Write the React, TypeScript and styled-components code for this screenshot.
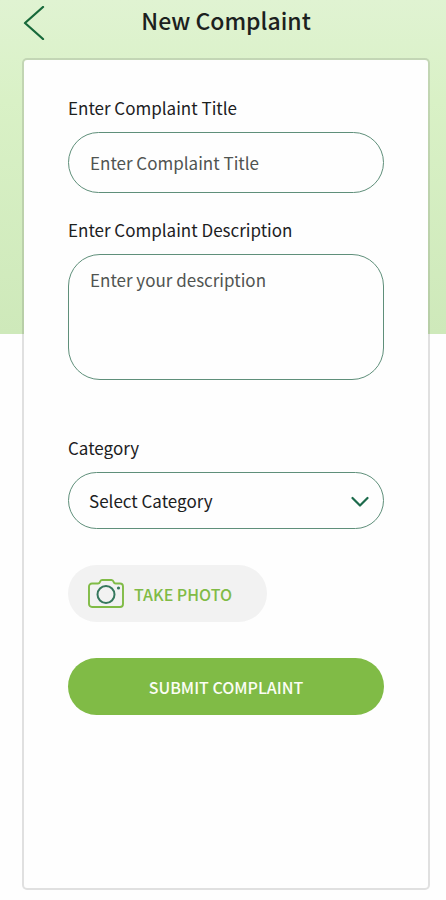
import React from "react";
import styled, { createGlobalStyle } from "styled-components";

const GlobalStyle = createGlobalStyle`
  *, *::before, *::after { box-sizing: border-box; }
  body {
    margin: 0;
    background: #fefefe;
    color: #1c211e;
    font-family: "Noto Sans CJK SC", "Noto Sans", sans-serif;
  }
  button, input, textarea, select { font: inherit; }
`;

const Page = styled.div`
  display: flex;
  flex-direction: column;
  min-height: 100vh;
  padding: 0 16px 10px 22px;
  background: linear-gradient(#e0f3d2, #d9f1c6 30%, #cee9ba) top / 100% 334px no-repeat;
`;

const Header = styled.header`
  display: grid;
  grid-template-columns: 24px 1fr 24px;
  align-items: center;
  height: 58px;
  padding-bottom: 13px;
`;

const BackButton = styled.button`
  display: flex;
  padding: 0;
  border: 0;
  background: none;
  color: #17693a;
  cursor: pointer;
`;

const Title = styled.h1`
  margin: 0;
  padding-bottom: 6px;
  font-size: 23px;
  font-weight: 500;
  line-height: 32px;
  text-align: center;
`;

const Card = styled.form`
  display: flex;
  flex: 1;
  flex-direction: column;
  padding: 36px 44px;
  border: 2px solid rgba(70, 70, 70, 0.16);
  border-radius: 5px;
  background: #fefefe;
  background-clip: padding-box;
`;

const Field = styled.div<{ $gap: number }>`
  display: flex;
  flex-direction: column;
  gap: 12px;
  margin-bottom: ${({ $gap }) => $gap}px;
`;

const Label = styled.label`
  font-size: 17px;
  line-height: 24px;
`;

const controlStyle = `
  width: 100%;
  border: 1px solid #5f8f7a;
  background: transparent;
  font-size: 17px;
  line-height: 24px;
  outline-color: #17693a;
  &::placeholder { color: #505451; opacity: 1; }
`;

const TextInput = styled.input`
  ${controlStyle}
  height: 61px;
  padding: 0 21px;
  border-radius: 32px;
`;

const TextArea = styled.textarea`
  ${controlStyle}
  display: block;
  height: 126px;
  padding: 13px 21px;
  border-radius: 32px;
  resize: none;
`;

const SelectShell = styled.div`
  display: grid;
  align-items: center;
  & > * { grid-area: 1 / 1; }
`;

const Select = styled.select`
  ${controlStyle}
  height: 57px;
  padding: 0 48px 0 20px;
  border-radius: 32px;
  color: inherit;
  appearance: none;
`;

const Chevron = styled.svg`
  justify-self: end;
  margin-right: 15px;
  color: #1c6a4b;
  pointer-events: none;
`;

const Button = styled.button<{ $primary?: boolean }>`
  display: flex;
  align-items: center;
  justify-content: ${({ $primary }) => ($primary ? "center" : "flex-start")};
  align-self: ${({ $primary }) => ($primary ? "stretch" : "flex-start")};
  gap: 10px;
  height: 57px;
  margin-bottom: 36px;
  padding: ${({ $primary }) => ($primary ? "0 20px" : "0 35px 0 20px")};
  border: 0;
  border-radius: 32px;
  background: ${({ $primary }) => ($primary ? "#80bb46" : "#f2f2f2")};
  color: ${({ $primary }) => ($primary ? "#fbfdf5" : "#80bb46")};
  font-size: 16px;
  font-weight: 500;
  line-height: 24px;
  cursor: pointer;
`;

const BackIcon = () => (
  <svg width="24" height="34" viewBox="0 0 24 34" fill="none" aria-hidden="true">
    <path d="M21 1 3 17l18 16" stroke="currentColor" strokeWidth="2.3" strokeLinecap="round" strokeLinejoin="round" />
  </svg>
);

const CameraIcon = () => (
  <svg width="36" height="30" viewBox="0 0 36 30" fill="none" aria-hidden="true">
    <path
      d="M4 4.500h6c1.200 0 1.600-.4 2-1.600.3-1.200.9-1.900 2-1.900h9.500c1.200 0 1.700.7 2.100 1.900.4 1.200.8 1.600 2 1.600H32a3 3 0 0 1 3 3V25a3 3 0 0 1-3 3H4a3 3 0 0 1-3-3V7.500a3 3 0 0 1 3-3Z"
      stroke="#80bb46"
      strokeWidth="1.9"
    />
    <circle cx="18" cy="15.500" r="8.500" stroke="#36785d" strokeWidth="2" />
    <circle cx="30.500" cy="9" r="1.600" fill="#36785d" />
  </svg>
);

export default function App() {
  return (
    <>
      <GlobalStyle />
      <Page>
        <Header>
          <BackButton type="button" aria-label="Back">
            <BackIcon />
          </BackButton>
          <Title>New Complaint</Title>
        </Header>
        <Card onSubmit={(event) => event.preventDefault()}>
          <Field $gap={25}>
            <Label htmlFor="title">Enter Complaint Title</Label>
            <TextInput id="title" type="text" placeholder="Enter Complaint Title" />
          </Field>
          <Field $gap={56}>
            <Label htmlFor="description">Enter Complaint Description</Label>
            <TextArea id="description" placeholder="Enter your description" />
          </Field>
          <Field $gap={36}>
            <Label htmlFor="category">Category</Label>
            <SelectShell>
              <Select id="category" defaultValue="">
                <option value="">Select Category</option>
              </Select>
              <Chevron width="18" height="14" viewBox="0 0 18 14" fill="none" aria-hidden="true">
                <path d="m1.500 4 7.500 7.500L16.500 4" stroke="currentColor" strokeWidth="2.200" strokeLinecap="round" strokeLinejoin="round" />
              </Chevron>
            </SelectShell>
          </Field>
          <Button type="button">
            <CameraIcon />
            TAKE PHOTO
          </Button>
          <Button type="submit" $primary>
            SUBMIT COMPLAINT
          </Button>
        </Card>
      </Page>
    </>
  );
}
